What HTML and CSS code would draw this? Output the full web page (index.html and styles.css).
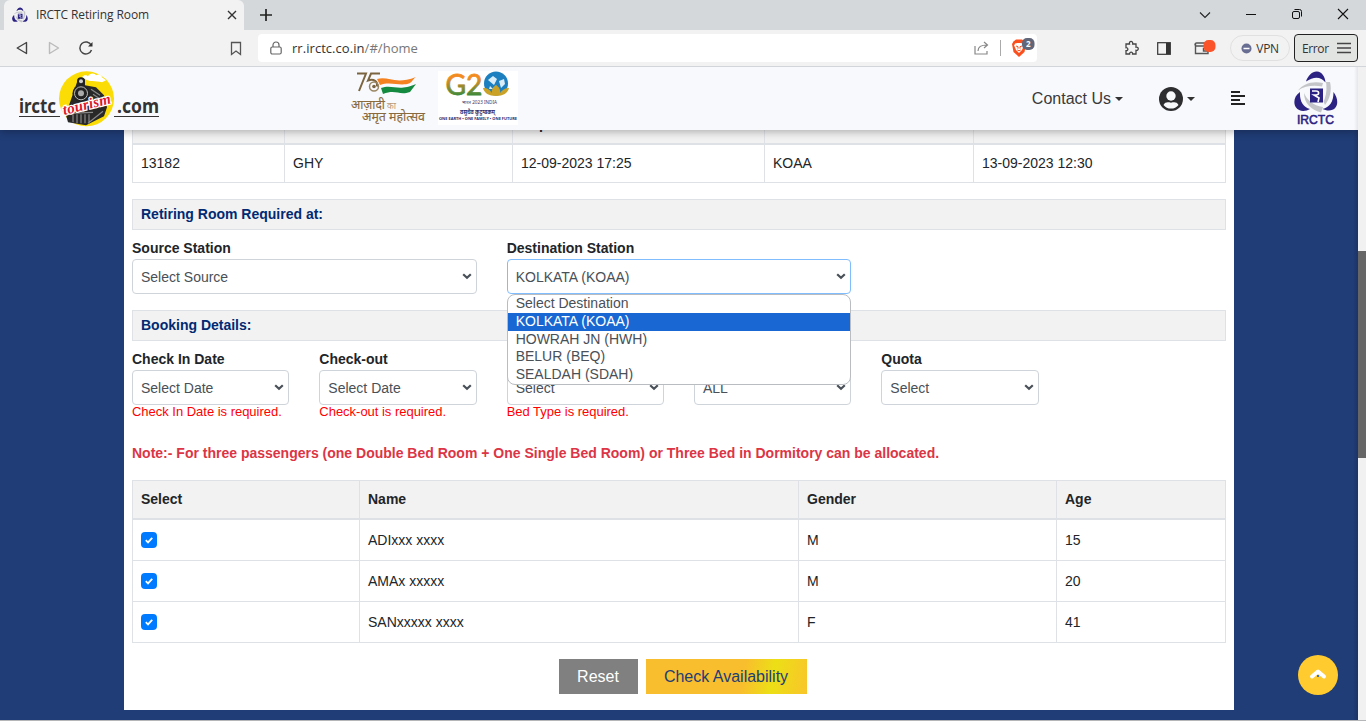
FILE: index.html
```html
<!DOCTYPE html>
<html lang="en">
<head>
<meta charset="utf-8">
<title>IRCTC Retiring Room</title>
<link rel="stylesheet" href="styles.css">
</head>
<body>
<svg width="0" height="0" class="defs">
  <symbol id="rail" viewBox="0 0 44 42">
    <path d="M12 10.500C14 4 19 0 23 .5c5 .5 8 5 8.500 11C27 5.500 20 5 12 10.500z" fill="#2b2283"/>
    <path d="M6 21C0 25-1 32 2 36.500c3 4.500 10 4 14 1.500C9 36 5.500 30 6 21z" fill="#2b2283"/>
    <path d="M39.500 21c4 5 5 12 2 15.500-3 4-9 3.500-13 1.500 7-1.500 11-7 11-17z" fill="#2b2283"/>
    <path d="M4 19.500C9 13 18 9.500 29 12l-1 3.500C19 14 11 15 4 19.500zM32 11h4c2 8 0 17-5 23l-1.500-3.500c3-6 3.500-13 2.500-19.500zM10 22c3 7 9 12.500 19 14l-2 5.500C17 39 10 32 10 22z" fill="#c3c5c8"/>
    <path d="M16 17.500h13v14H16z" fill="#2b2283"/>
    <path d="M18 20h4c3.500 0 3.500 4 0 4h-2l5 3-1 4" fill="none" stroke="#fff" stroke-width="1.600"/>
  </symbol>
  <symbol id="chev" viewBox="0 0 10 7"><path d="M1.2 1.2 5 4.8 8.8 1.2" fill="none" stroke="#495057" stroke-width="2.2"/></symbol>
</svg>
<div class="tabs">
  <div class="tab"><svg width="16" height="16"><use href="#rail"/></svg><span>IRCTC Retiring Room</span>
    <svg class="close" width="10" height="10"><path d="M1 1l8 8M9 1l-8 8" stroke="#333" stroke-width="1.4"/></svg></div>
  <svg class="plus" width="12" height="12"><path d="M6 0v12M0 6h12" stroke="#222" stroke-width="1.7"/></svg>
  <div class="win">
    <svg width="12" height="12"><path d="M1 3.500l5 5 5-5" fill="none" stroke="#222" stroke-width="1.1"/></svg>
    <svg width="12" height="12"><path d="M1 5.500h10" stroke="#111"/></svg>
    <svg width="12" height="12" fill="none" stroke="#111"><rect x="1.500" y="2.500" width="7" height="7" rx="1.500"/><path d="M3.500 .5h5a2 2 0 0 1 2 2v5"/></svg>
    <svg width="12" height="12"><path d="M1 0l10 10M11 0L1 10" stroke="#111" stroke-width="1.1"/></svg>
  </div>
</div>
<div class="bar">
  <svg class="back" width="12" height="14" fill="none" stroke="#444" stroke-width="1.400" stroke-linejoin="round"><path d="M10.500 1.500v11L1.200 7z"/></svg>
  <svg class="fwd" width="12" height="14" fill="none" stroke="#bbb" stroke-width="1.400" stroke-linejoin="round"><path d="M1.500 1.500v11L10.500 7z"/></svg>
  <svg class="reload" width="15" height="14" fill="none" stroke="#444" stroke-width="1.500"><path d="M12.200 4.200A6 6 0 1 0 12.500 9"/><path d="M9 5.500h4.500V1z" fill="#333" stroke="none"/></svg>
  <svg class="mark" width="12" height="15" fill="none" stroke="#555" stroke-width="1.300"><path d="M1.500 1.500h9v12L6 10l-4.500 3.500z"/></svg>
  <div class="url">
    <svg width="12" height="14" fill="none" stroke="#666" stroke-width="1.200"><rect x=".8" y="6" width="10.400" height="7" rx="1.500"/><path d="M3 6V4a3 3 0 0 1 6 0v2"/></svg>
    <span class="host">rr.irctc.co.in<i>/#/home</i></span>
    <svg class="share" width="15" height="14" fill="none" stroke="#888" stroke-width="1.200"><path d="M1 5v8h12v-3M4 10c0-4 3-6 9-6M10 1l3.500 3L10 7"/></svg>
    <span class="sep"></span>
    <svg width="24" height="20"><path d="M2.500 3.500 5 1.500h6L13.500 3.500 15 6l-1.500 8L8 19l-5.500-5L1 6z" fill="#fb4f1d"/><path d="M4 5.500l2.500-.5h3l2.500.5.800 2-1.800 4.500-3 3-3-3-1.800-4.500z" fill="#fff"/><path d="M5 8l2 .7v2M11 8l-2 .7v2M6.300 12l1.700.8 1.700-.8" stroke="#fb4f1d" fill="none"/><rect x="11" y="0" width="12.500" height="12" rx="5" fill="#626679"/><text x="17.200" y="9" text-anchor="middle" class="badge">2</text></svg>
  </div>
  <svg class="ext" width="16" height="16" fill="none" stroke="#444" stroke-width="1.300"><path d="M2 4h3.500c-1-3.500 4-3.500 3.200 0H12v3.200c3-.6 3 3.800 0 3.200V14H8.600c.3-2.500-3.200-2.500-3 0H2v-3.300c2.500.2 2.500-3.200 0-3z"/></svg>
  <svg class="side" width="14" height="13"><rect x=".7" y=".7" width="12.600" height="11.600" fill="none" stroke="#333" stroke-width="1.200"/><path d="M9 1h4v11H9z" fill="#333"/></svg>
  <svg class="wallet" width="22" height="16"><path d="M12 3H2.500a1.500 1.500 0 0 0 0 3H14v7.500H1.500V4M14 8.500H9.500v2.500H14" fill="none" stroke="#555" stroke-width="1.400"/><rect x="9.500" y="0" width="12" height="12" rx="5" fill="#fb542b"/></svg>
  <div class="vpn"><svg width="11" height="11"><circle cx="5.500" cy="5.500" r="5" fill="#686d92"/><path d="M2.500 5.500h6" stroke="#fff" stroke-width="1.500"/></svg>VPN</div>
  <div class="err">Error<svg width="14" height="12"><path d="M0 1.500h14M0 6h14M0 10.500h14" stroke="#444" stroke-width="1.400"/></svg></div>
</div>
<div class="view">
  <div class="page">
    <nav class="nav">
      <svg class="logo" width="144" height="60" viewBox="0 0 144 60">
        <g transform="translate(-3 -.7)">
        <circle cx="71.500" cy="30.500" r="27.500" fill="#fbdc05"/>
        <path d="M67 9c2-3 5-2 6-1 2-4 7-3 8-1 3-2 6 0 6 2l4 3-4 2c-7-2-12 1-20-5z" fill="#fff"/>
        <path d="M63 11h7v6l11 2 8 8 3 12-3 9-18 9-18-3-2-7 3-10z" fill="#282828"/>
        <circle cx="66" cy="13" r="4" fill="#222"/><circle cx="66" cy="13" r="2" fill="#ccc"/>
        <circle cx="66" cy="25" r="8.500" fill="#222"/><circle cx="66" cy="25" r="6.500" fill="none" stroke="#bbb"/><circle cx="66" cy="25" r="3" fill="#aaa"/>
        <path d="M76 21l9 6M78 26l9 6M58 46v8M62 46v9M66 46v9M70 46v9M74 46v8M54 45l24-1M73 55l15-12" stroke="#888" stroke-width="1.200"/>
        <text x="47" y="41" class="tour" textLength="49" transform="rotate(-14 71 36)">tourism</text>
        </g>
        <text x="1" y="44" class="word" textLength="37" lengthAdjust="spacingAndGlyphs">irctc</text>
        <text x="99" y="44" class="word" textLength="42" lengthAdjust="spacingAndGlyphs">.com</text>
        <path d="M1 47.500h41M96 47.500h45" stroke="#333" stroke-width="1.200"/>
      </svg>
      <svg class="azadi" width="80" height="58" viewBox="0 0 80 58">
        <path d="M6 3.500h9L8 21M29 3.500h-9l-3 7c6-2 10 1 9 6" fill="none" stroke="#7b6540" stroke-width="2"/>
        <circle cx="23" cy="16.500" r="4.500" fill="none" stroke="#9a8763" stroke-width="1.500"/><circle cx="23" cy="16.500" r="1.800" fill="#7b6540"/>
        <path d="M26 9c12-3 18 6 39-2-4 3-3 4-6 6-9 4-19-2-30 2z" fill="#f58220"/>
        <path d="M30 18c12-4 17 4 35-4l-6 8c-11 4-14-3-27 2z" fill="#138a3f"/>
        <text x="0" y="39" class="hi" textLength="34" lengthAdjust="spacingAndGlyphs">आज़ादी</text><text x="36" y="39" class="hi-s" textLength="9" lengthAdjust="spacingAndGlyphs">का</text>
        <text x="11" y="51" class="hi" textLength="63" lengthAdjust="spacingAndGlyphs">अमृत महोत्सव</text>
      </svg>
      <svg class="g20" width="80" height="54" viewBox="0 0 80 54">
        <defs><linearGradient id="gg" x1="0" y1="0" x2="0" y2="1"><stop offset=".35" stop-color="#f28c22"/><stop offset=".85" stop-color="#3d8a3a"/></linearGradient></defs>
        <path d="M0 0h80v54H0z" fill="#fff"/>
        <text x="7.500" y="23.500" class="g" textLength="37" lengthAdjust="spacingAndGlyphs" fill="url(#gg)" stroke="url(#gg)" stroke-width=".8">G2</text>
        <circle cx="58" cy="12.500" r="12" fill="#1c7fc0"/>
        <path d="M50 9l5-4 4 3-3 6zM61 10l5-2 1 5-4 4zM52 15l3 3h-4z" fill="#d9edf8"/>
        <path d="M45 17c5 0 7 2 9 5-1-3 1-6 4-8 3 2 5 5 4 8 2-3 5-5 9-5-1 5-6 8-13 8s-12-3-13-8z" fill="#c9a227"/>
        <text x="24" y="33" class="t1" textLength="35" lengthAdjust="spacingAndGlyphs">भारत 2023 INDIA</text>
        <text x="22" y="42.500" class="t2" textLength="35" lengthAdjust="spacingAndGlyphs">वसुधैव कुटुम्बकम्</text>
        <text x="1" y="49" class="t3" textLength="78" lengthAdjust="spacingAndGlyphs">ONE EARTH • ONE FAMILY • ONE FUTURE</text>
      </svg>
      <div class="contact">Contact Us<i class="caret"></i></div>
      <div class="user"><svg width="24" height="24" viewBox="0 0 24 24"><circle cx="12" cy="12" r="12" fill="#2e2e30"/><circle cx="12" cy="9" r="4.700" fill="#f8f9fa"/><path d="M4.500 18c1.500-3 4-3 7.500-2.300 3.500-.7 6-.7 7.500 2.300a9.600 9.600 0 0 1-15 0z" fill="#f8f9fa"/></svg><i class="caret"></i></div>
      <svg class="lines" width="14" height="14"><path d="M0 1h9M0 5h14M0 9h9M0 13h14" stroke="#222" stroke-width="2"/></svg>
      <div class="irctc"><svg width="44" height="42"><use href="#rail"/></svg><svg width="44" height="13"><text x="3" y="11" textLength="37" lengthAdjust="spacingAndGlyphs">IRCTC</text></svg></div>
    </nav>
    <main class="card">
      <table class="grid trip">
        <tr><th></th><th></th><th>Departure</th><th></th><th></th></tr>
        <tr><td>13182</td><td>GHY</td><td>12-09-2023 17:25</td><td>KOAA</td><td>13-09-2023 12:30</td></tr>
      </table>
      <h2 class="band">Retiring Room Required at:</h2>
      <div class="row wide">
        <div class="field"><label>Source Station</label><div class="sel">Select Source<svg width="10" height="7"><use href="#chev"/></svg></div></div>
        <div class="field"><label>Destination Station</label><div class="sel focus">KOLKATA (KOAA)<svg width="10" height="7"><use href="#chev"/></svg></div>
          <ul class="menu"><li>Select Destination</li><li class="on">KOLKATA (KOAA)</li><li>HOWRAH JN (HWH)</li><li>BELUR (BEQ)</li><li>SEALDAH (SDAH)</li></ul></div>
      </div>
      <h2 class="band">Booking Details:</h2>
      <div class="row five">
        <div class="field"><label>Check In Date</label><div class="sel">Select Date<svg width="10" height="7"><use href="#chev"/></svg></div><p>Check In Date is required.</p></div>
        <div class="field"><label>Check-out</label><div class="sel">Select Date<svg width="10" height="7"><use href="#chev"/></svg></div><p>Check-out is required.</p></div>
        <div class="field"><label></label><div class="sel">Select<svg width="10" height="7"><use href="#chev"/></svg></div><p>Bed Type is required.</p></div>
        <div class="field"><label></label><div class="sel">ALL<svg width="10" height="7"><use href="#chev"/></svg></div></div>
        <div class="field"><label>Quota</label><div class="sel">Select<svg width="10" height="7"><use href="#chev"/></svg></div></div>
      </div>
      <div class="note">Note:- For three passengers (one Double Bed Room + One Single Bed Room) or Three Bed in Dormitory can be allocated.</div>
      <table class="grid pax">
        <tr><th>Select</th><th>Name</th><th>Gender</th><th>Age</th></tr>
        <tr><td><span class="chk"><svg width="8" height="8"><path d="M.8 4.200l2.200 2.200 4.200-4.600" fill="none" stroke="#fff" stroke-width="1.800"/></svg></span></td><td>ADIxxx xxxx</td><td>M</td><td>15</td></tr>
        <tr><td><span class="chk"><svg width="8" height="8"><path d="M.8 4.200l2.200 2.200 4.200-4.600" fill="none" stroke="#fff" stroke-width="1.800"/></svg></span></td><td>AMAx xxxxx</td><td>M</td><td>20</td></tr>
        <tr><td><span class="chk"><svg width="8" height="8"><path d="M.8 4.200l2.200 2.200 4.200-4.600" fill="none" stroke="#fff" stroke-width="1.800"/></svg></span></td><td>SANxxxxx xxxx</td><td>F</td><td>41</td></tr>
      </table>
      <div class="actions"><button class="reset">Reset</button><button class="check">Check Availability</button></div>
    </main>
    <div class="top"><svg width="18" height="12"><path d="M3 7.500 9 2.500l6 5" fill="none" stroke="#fff" stroke-width="4" stroke-linecap="round" stroke-linejoin="round"/><path d="M8 6h2v2H8z" fill="#3f6fc0"/></svg></div>
  </div>
  <div class="scroll"><div class="thumb"></div></div>
</div>
</body>
</html>
```
FILE: styles.css
```css
* { box-sizing: border-box; }
body { margin: 0; height: 721px; overflow: hidden; background: #b4b6b8; font-family: "Liberation Sans", Arial, sans-serif; font-size: 14px; color: #212529; }
svg { display: block; flex: none; overflow: visible; }
.defs { position: absolute; }
.tabs { height: 30px; background: #d4d8db; display: flex; align-items: center; padding-left: 4px; font-family: "Open Sans", sans-serif; }
.tab { width: 240px; height: 30px; background: #f2f2f2; border-radius: 6px 6px 0 0; display: flex; align-items: center; padding: 0 7px 0 8px; font-size: 12px; color: #333; }
.tab span { margin: -1px 0 0 8px; letter-spacing: -.1px; }
.close { margin-left: auto; }
.plus { margin-left: 16px; }
.win { margin-left: auto; display: flex; gap: 34px; padding-right: 17px; }
.bar { height: 37px; background: #f2f2f2; border-bottom: 1px solid #d2d5d9; display: flex; align-items: center; padding: 0 8px 0 16px; font-family: "Open Sans", sans-serif; color: #333; }
.fwd { margin-left: 20px; }
.reload { margin-left: 19px; }
.mark { margin-left: 136px; }
.url { width: 780px; height: 28px; margin-left: 16px; background: #fff; border-radius: 4px; display: flex; align-items: center; padding: 0 2px 0 12px; }
.host { margin-left: 10px; font-size: 13px; letter-spacing: .05px; }
.host i { font-style: normal; color: #777; }
.share { margin-left: auto; }
.sep { width: 1px; height: 16px; background: #aaa; margin: 0 10px 0 11px; }
.badge { font: bold 8px "Open Sans", sans-serif; fill: #fff; }
.ext { margin-left: 87px; }
.side { margin-left: 17px; }
.wallet { margin-left: 23px; }
.vpn { margin-left: 14px; width: 60px; height: 26px; border: 1px solid #e0e0e0; border-radius: 13px; display: flex; align-items: center; justify-content: center; gap: 4px; font-size: 12px; letter-spacing: -.3px; }
.err { margin-left: 4px; width: 64px; height: 28px; border: 1px solid #222; border-radius: 4px; background: #e2e4e2; display: flex; align-items: center; justify-content: space-between; padding: 0 6px 0 7px; font-size: 12px; letter-spacing: -.4px; }
.view { height: 653px; display: flex; overflow: hidden; }
.page { flex: 1; background: linear-gradient(to left, #1d3464, #203d77 5px); overflow: hidden; position: relative; }
.nav { height: 63px; background: linear-gradient(to left, #e4e6e9, #f8f9fc 4px); box-shadow: 0 2px 8px rgba(0,0,0,.28); position: relative; z-index: 2; display: flex; align-items: center; }
.logo { margin-left: 18px; }
.word { font: bold 19px "Noto Sans", sans-serif; fill: #333; }
.tour { font: italic bold 15px "Liberation Serif", serif; fill: #e0162b; stroke: #fff; stroke-width: 2.5px; paint-order: stroke; }
.azadi { margin-left: 189px; }
.hi { font: 13px "Noto Sans Devanagari", "Noto Sans", sans-serif; fill: #8a6a3c; stroke: #8a6a3c; stroke-width: .15px; }
.hi-s { font: 9px "Noto Sans Devanagari", "Noto Sans", sans-serif; fill: #b89a76; }
.g20 { margin-left: 7px; align-self: flex-start; margin-top: 4px; }
.g { font: 29px Lato, sans-serif; }
.t1 { font: 5px "Noto Sans", sans-serif; fill: #3b3768; }
.t2 { font: bold 7px "Noto Sans Devanagari", "Noto Sans", sans-serif; fill: #2b2a6b; }
.t3 { font: bold 3.500px "Noto Sans", sans-serif; fill: #2b2a6b; }
.contact { margin-left: auto; font-size: 16px; color: #3a3a3a; display: flex; align-items: center; }
.caret { border: 4px solid transparent; border-top-color: #333; border-bottom: 0; margin-left: 4px; }
.user { margin-left: 36px; display: flex; align-items: center; }
.lines { margin-left: 36px; margin-top: -2px; }
.irctc { margin: 0 20px 0 49px; }
.irctc text { font: 13px "Liberation Sans", sans-serif; fill: #2b2283; stroke: #2b2283; stroke-width: .6px; }
.card { width: 1110px; height: 605px; margin: -25px 0 0 124px; background: #fff; padding: 0 8px; }
.grid { border-collapse: collapse; table-layout: fixed; width: 1094px; }
.grid th, .grid td { border: 1px solid #dee2e6; padding: 0 8px; text-align: left; }
.grid th { background: #f2f2f2; border-bottom-width: 2px; height: 38px; }
.trip td { height: 39px; padding-bottom: 1px; }
.trip th:nth-child(1) { width: 152px; }
.trip th:nth-child(2) { width: 228px; }
.trip th:nth-child(3) { width: 252px; }
.trip th:nth-child(4) { width: 209px; }
.pax td { height: 41px; }
.pax tr:nth-child(2) td { height: 42px; }
.pax th:nth-child(1) { width: 227px; }
.pax th:nth-child(2) { width: 439px; }
.pax th:nth-child(3) { width: 258px; }
.band { margin: 16px 0 0; height: 31px; line-height: 29px; border: 1px solid #dee2e6; background: #f2f2f2; padding-left: 8px; font-size: 14px; font-weight: bold; color: #012a72; }
.row { display: grid; gap: 30px; }
.wide { grid-template-columns: 344.67px 344.67px; height: 64px; }
.five { grid-template-columns: repeat(5, 157.33px); height: 79px; }
.field { position: relative; }
.field label { display: block; height: 29px; line-height: 36px; font-weight: bold; }
.sel { height: 35px; border: 1px solid #ced4da; border-radius: 4px; padding: 0 4px 0 8px; display: flex; align-items: center; justify-content: space-between; color: #495057; background: #fff; }
.focus { border-color: #80bdff; }
.field p { margin: 0; line-height: 14px; font-size: 13px; letter-spacing: -.02px; color: red; }
.menu { position: absolute; z-index: 1; left: 0; top: 64px; width: 344px; height: 91px; margin: 0; padding: 0; list-style: none; background: #fff; border: 1px solid #b9bcc0; border-radius: 8px; overflow: hidden; color: #495057; }
.menu li { height: 17.8px; line-height: 17.8px; padding-left: 8px; }
.menu .on { background: #1967d2; color: #fff; }
.note { height: 60px; line-height: 67px; color: #dc3545; font-weight: bold; }
.chk { display: flex; width: 16px; height: 16px; border-radius: 4px; background: #007bff; align-items: center; justify-content: center; }
.actions { display: flex; justify-content: center; gap: 8px; padding-top: 16px; margin-left: 7px; }
.actions button { border: 0; padding: 0; height: 35px; font: 16px "Liberation Sans", sans-serif; }
.reset { width: 79px; background: #808080; color: #fff; }
.check { width: 161px; color: #213d77; background: linear-gradient(100deg, #f9be2d 60%, #ecdf16 78%, #f9c52a 100%); }
.top { position: absolute; right: 20px; bottom: 25px; width: 40px; height: 40px; border-radius: 50%; background: #ffcb2e; display: flex; align-items: center; justify-content: center; }
.scroll { width: 8px; background: #f1f1f1; padding-top: 184px; }
.thumb { height: 207px; background: #666; }
```
